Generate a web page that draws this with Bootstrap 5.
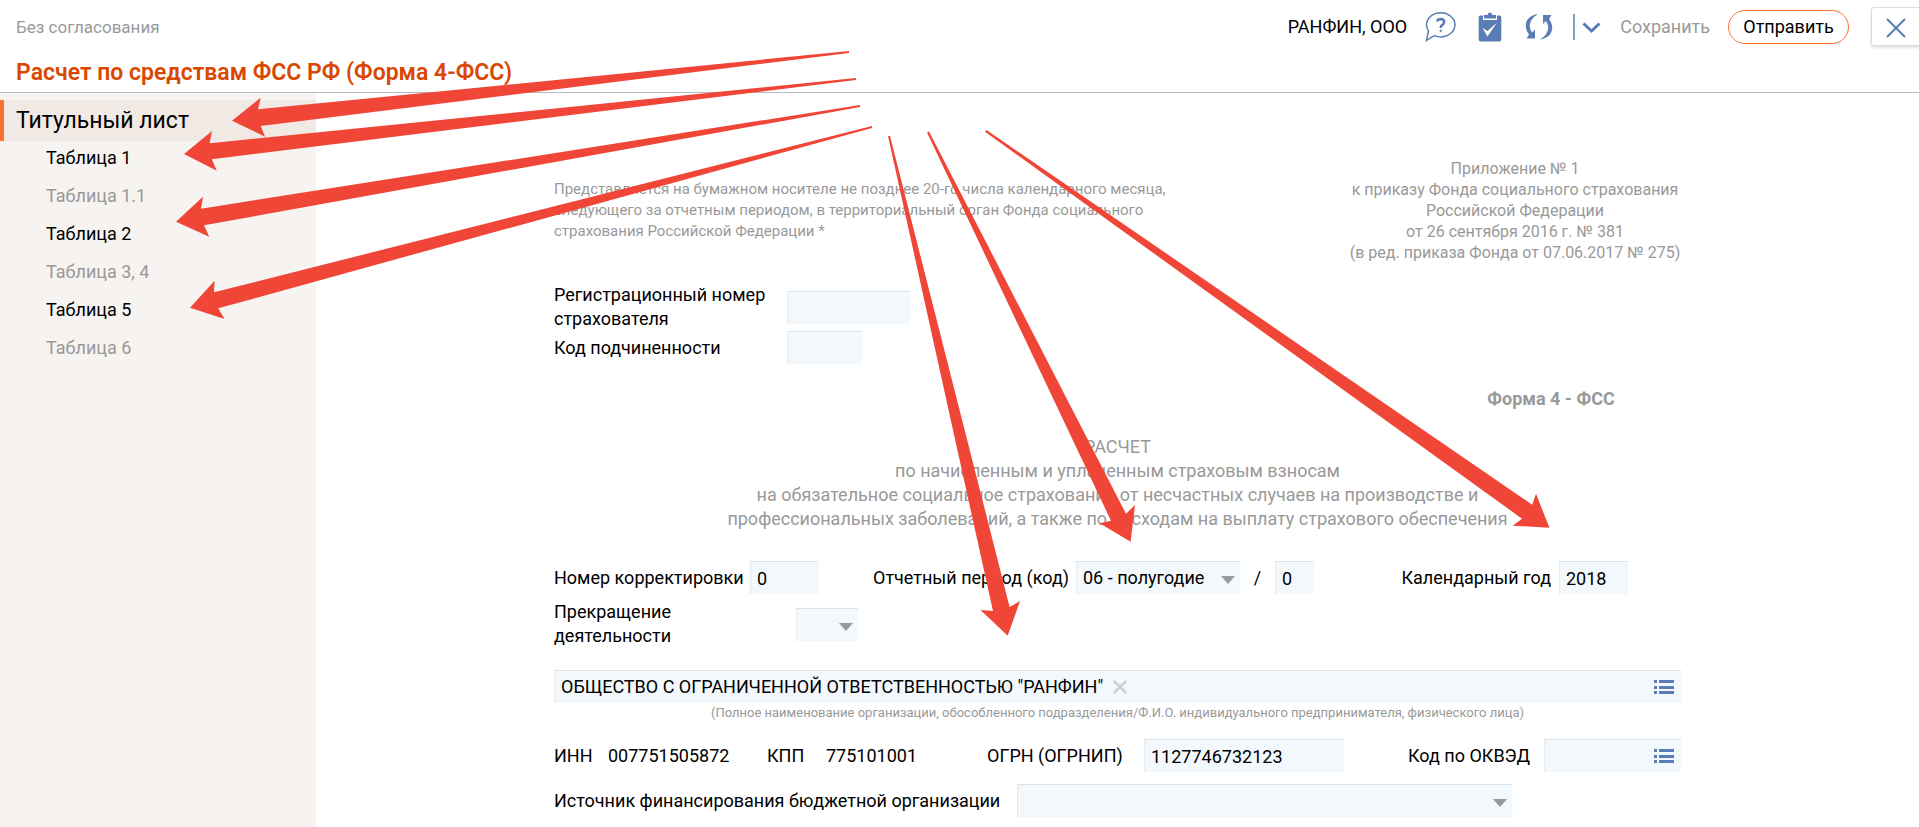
<!DOCTYPE html>
<html lang="ru">
<head>
<meta charset="utf-8">
<meta name="viewport" content="width=device-width, initial-scale=1">
<title>Расчет по средствам ФСС РФ (Форма 4-ФСС)</title>
<link rel="stylesheet" href="https://cdn.jsdelivr.net/npm/bootstrap@5.3.0/dist/css/bootstrap.min.css">
<style>
  body { font-family: Roboto, "Liberation Sans", sans-serif; font-size: 18px; line-height: 24px; color: #000; background: #fff; }
  a, button { color: inherit; text-decoration: none; }
  .muted { color: #999; }

  /* header */
  .top-line { height: 53px; padding-left: 16px; }
  .status { font-size: 17px; }
  .plain-btn { border: 0; background: none; padding: 0; line-height: 24px; }
  .plain-btn svg { display: block; }
  .ico { color: #5a7db5; }
  .tools { gap: 18px; }
  .send-btn { border: 1px solid #ff7033; border-radius: 17px; background: #fff; height: 34px; width: 121px; }
  .close-btn { width: 48px; height: 39px; border: 1px solid #ddd; border-right: 0; border-radius: 3px 0 0 3px; background: #fff; box-shadow: 0 2px 3px rgba(0,0,0,.12); }
  .doc-title { font-size: 23px; line-height: 39px; font-weight: 600; color: #d94800; padding-left: 16px; border-bottom: 1px solid #b9b9b9; margin: 0; }

  /* section list */
  .side { width: 316px; background: #f6f3f0; padding-top: 7px; }
  .side-head { display: block; border-left: 4px solid #ff7033; background: #f0e9e4; padding-left: 12px; font-size: 23px; line-height: 41px; }
  .side-list { gap: 14px; padding: 5px 0 0 46px; }

  /* form sheet */
  .sheet { max-width: 1127px; padding-top: 65px; }
  .note { font-size: 15px; line-height: 21px; padding-top: 21px; }
  .annex { font-size: 16px; line-height: 21px; width: 332px; }
  .field { height: 33px; border: 0; border-top: 1px solid #d9e3ea; border-left: 1px solid #e3ebf1; border-radius: 0; background: #f3f8fd; padding: 0 0 0 6px; color: #000; }
  select.field { appearance: none; width: 100%; }
  .pick { position: relative; }
  .pick::after { content: ""; position: absolute; right: 5px; top: 15px; border: 7px solid transparent; border-top: 8px solid #999; border-bottom: 0; pointer-events: none; }
  .w-reg { width: 233px; } .w-num { width: 196px; } .w-per { width: 203px; } .w-stop { width: 242px; }
  .f-39 { width: 39px; } .f-62 { width: 62px; } .f-69 { width: 69px; } .f-75 { width: 75px; } .f-123 { width: 123px; }
  .f-137 { width: 137px; } .f-164 { width: 164px; } .f-200 { width: 200px; } .f-495 { width: 495px; }
  .reg { margin-top: 20px; }
  .form-name { width: 260px; margin-top: 23px; }
  .report-name { margin-top: 24px; }
  .period { margin-top: 30px; padding-right: 53px; }
  .period .w-per { margin-left: 54px; }
  .period .ms-auto { padding-right: 8px; }
  .slash { width: 35px; }
  .stop { margin-top: 6px; }
  .org { margin-top: 22px; }
  .org input { border: 0; background: none; padding: 0; width: 552px; }
  .caption-line { font-size: 13px; line-height: 20px; }
  .list-btn { margin-right: 7px; }
  .codes { display: grid; grid-template-columns: 54px 159px 59px 161px 157px 200px 1fr 137px; margin-top: 16px; }
  .codes label[for="okved"] { justify-self: end; padding-right: 14px; }
  .okved input { border: 0; background: none; min-width: 0; padding: 0; }
  .source { margin-top: 12px; }
  .source label { width: 463px; }

  .arrows { position: absolute; left: 0; top: 0; width: 100%; pointer-events: none; fill: #f04638; }
</style>
</head>
<body class="min-vh-100 d-flex flex-column position-relative">
<header>
  <div class="top-line d-flex align-items-center">
    <span class="status muted">Без согласования</span>
    <div class="tools d-flex align-items-center ms-auto">
      <span>РАНФИН, ООО</span>
      <button class="plain-btn ico" type="button" aria-label="Помощь">
        <svg width="31" height="30" viewBox="0 0 31 30" fill="none" stroke="currentColor"><path d="M1.500 28.500 3.500 18.900A14.200 12 0 1 1 9.500 23.600Q5.500 25.500 1.500 28.500Z" stroke-width="1.500"/><path d="M12 9.500Q12.700 7 15.800 7 19.200 7.100 19.200 10 19.200 11.800 17.200 13.100 15.600 14.300 15.700 16" stroke-width="2.500"/><circle cx="15.700" cy="18.800" r=".8" fill="currentColor"/></svg>
      </button>
      <button class="plain-btn ico ms-1" type="button" aria-label="Задачи">
        <svg width="24" height="30" viewBox="0 0 24 30"><path fill="currentColor" d="M2.500 3.500H5V8h14V3.500h2.500Q23.300 3.500 23.300 5.500V27.500q0 2-2 2H2.700q-2 0-2-2V5.500q0-2 1.800-2Z"/><path fill="currentColor" d="M6 3h3.500q.5-2.500 2.500-2.500T14.500 3H18v3.500H6Z"/><path d="m4.500 16 5 8.500 9.500-14-9.500 8.500Z" fill="#fff"/></svg>
      </button>
      <button class="plain-btn ico ms-1" type="button" aria-label="Обновить">
        <svg width="30" height="28" viewBox="-1 0 30 28" fill="currentColor"><path d="M13 1C1 2.500-2.500 13 4 21.500L1.500 25.500H10V16.500L7.200 19.500C2.500 13.500 5 5.500 13 1Z"/><path d="M15 26.500C27 25 30.500 14.500 24 6L26.500 2H18V11L20.800 8C25.500 14 23 22 15 26.500Z"/></svg>
      </button>
      <button class="plain-btn ico" type="button" aria-label="Еще действия">
        <svg width="30" height="26" viewBox="0 0 30 26" fill="none" stroke="currentColor"><path d="M2 0V26" stroke-width="1.500"/><path d="m11.500 9.500 8 7.500 8-7.500" stroke-width="3"/></svg>
      </button>
      <button class="plain-btn muted" type="button">Сохранить</button>
      <button class="send-btn" type="button">Отправить</button>
      <button class="close-btn ico ms-1 p-0" type="button" aria-label="Закрыть">
        <svg width="20" height="20" viewBox="0 0 20 20" stroke="currentColor" stroke-width="2"><path d="m1 1 18 18M19 1 1 19"/></svg>
      </button>
    </div>
  </div>
  <h1 class="doc-title">Расчет по средствам ФСС РФ (Форма 4-ФСС)</h1>
</header>

<div class="d-flex flex-grow-1">
  <nav class="side flex-shrink-0">
    <a class="side-head" href="#">Титульный лист</a>
    <div class="side-list d-flex flex-column">
      <a href="#">Таблица 1</a>
      <a class="muted" href="#">Таблица 1.1</a>
      <a href="#">Таблица 2</a>
      <a class="muted" href="#">Таблица 3, 4</a>
      <a href="#">Таблица 5</a>
      <a class="muted" href="#">Таблица 6</a>
    </div>
  </nav>

  <main class="flex-grow-1">
    <form class="sheet mx-auto">
      <div class="muted d-flex justify-content-between">
        <p class="note mb-0">Представляется на бумажном носителе не позднее 20-го числа календарного месяца,<br>следующего за отчетным периодом, в территориальный орган Фонда социального<br>страхования Российской Федерации *</p>
        <p class="annex mb-0 text-center text-nowrap">Приложение № 1<br>к приказу Фонда социального страхования<br>Российской Федерации<br>от 26 сентября 2016 г. № 381<br>(в ред. приказа Фонда от 07.06.2017 № 275)</p>
      </div>

      <div class="reg d-flex align-items-center">
        <label class="w-reg" for="reg">Регистрационный номер<br>страхователя</label>
        <input class="field f-123" id="reg" type="text">
      </div>
      <div class="d-flex align-items-center">
        <label class="w-reg" for="sub">Код подчиненности</label>
        <input class="field f-75" id="sub" type="text">
      </div>

      <div class="form-name muted text-center fw-bold ms-auto">Форма 4 - ФСС</div>
      <div class="report-name muted text-center">РАСЧЕТ<br>по начисленным и уплаченным страховым взносам<br>на обязательное социальное страхование от несчастных случаев на производстве и<br>профессиональных заболеваний, а также по расходам на выплату страхового обеспечения</div>

      <div class="period d-flex align-items-center">
        <label class="w-num" for="corr">Номер корректировки</label>
        <input class="field f-69" id="corr" type="text" value="0">
        <label class="w-per" for="per">Отчетный период (код)</label>
        <div class="pick f-164"><select class="field" id="per"><option>06 - полугодие</option></select></div>
        <span class="slash text-center">/</span>
        <input class="field f-39" type="text" value="0" aria-label="Номер обращения">
        <label class="ms-auto" for="year">Календарный год</label>
        <input class="field f-69" id="year" type="text" value="2018">
      </div>
      <div class="stop d-flex align-items-center">
        <label class="w-stop" for="stop">Прекращение<br>деятельности</label>
        <div class="pick f-62"><select class="field" id="stop"><option></option></select></div>
      </div>

      <div class="org field d-flex align-items-center">
        <input type="text" value='ОБЩЕСТВО С ОГРАНИЧЕННОЙ ОТВЕТСТВЕННОСТЬЮ "РАНФИН"' aria-label="Полное наименование организации">
        <button class="plain-btn" type="button" aria-label="Очистить">
          <svg width="14" height="14" viewBox="0 0 14 14" stroke="#c8c8c8" stroke-width="2"><path d="m1 1 12 12M13 1 1 13"/></svg>
        </button>
        <button class="list-btn plain-btn ico ms-auto" type="button" aria-label="Выбрать организацию">
          <svg width="20" height="16" viewBox="0 0 20 16" fill="currentColor"><path d="M0 1h3v3H0ZM0 7h3v3H0ZM0 12h3v3H0ZM5 1h15v3H5ZM5 7h15v3H5ZM5 12h15v3H5Z"/></svg>
        </button>
      </div>
      <div class="caption-line muted text-center">(Полное наименование организации, обособленного подразделения/Ф.И.О. индивидуального предпринимателя, физического лица)</div>

      <div class="codes align-items-center">
        <span>ИНН</span><span>007751505872</span><span>КПП</span><span>775101001</span>
        <label for="ogrn">ОГРН (ОГРНИП)</label>
        <input class="field f-200" id="ogrn" type="text" value="1127746732123">
        <label for="okved">Код по ОКВЭД</label>
        <div class="okved field f-137 d-flex align-items-center">
          <input class="flex-fill" id="okved" type="text">
          <button class="list-btn plain-btn ico" type="button" aria-label="Выбрать код">
            <svg width="20" height="16" viewBox="0 0 20 16" fill="currentColor"><path d="M0 1h3v3H0ZM0 7h3v3H0ZM0 12h3v3H0ZM5 1h15v3H5ZM5 7h15v3H5ZM5 12h15v3H5Z"/></svg>
          </button>
        </div>
      </div>
      <div class="source d-flex align-items-center">
        <label for="src">Источник финансирования бюджетной организации</label>
        <div class="pick f-495"><select class="field" id="src"><option></option></select></div>
      </div>
    </form>
  </main>
</div>

<svg class="arrows" viewBox="0 0 1919 827" aria-hidden="true">
  <path d="M849 51 258 109.300 260.700 97.700 232 120.700 265 136.700 260.700 126 849 53Z"/>
  <path d="M856 78 209.600 143.300 212 131 184 154 216.800 170.700 211.800 159.300 856 80Z"/>
  <path d="M860 105 201 208.700 203 196.700 176 221.700 209.300 236.700 204 225.300 860 107Z"/>
  <path d="M872 126 214 292.300 214.600 280.700 190 307.700 224.600 319 218.200 308.300 872 128Z"/>
  <path d="M890 136 1009.600 607 1020 601 1007.700 635.700 980.500 610 993 611 888 136Z"/>
  <path d="M929 131.500 1126 513.700 1135 505 1130.600 541.700 1099.600 523.300 1111 520.700 927 132.500Z"/>
  <path d="M986.500 130 1532.200 504.700 1536 493.700 1549.400 527.700 1512.700 525.700 1522 518.700 985 131.700Z"/>
</svg>
<script src="https://cdn.jsdelivr.net/npm/bootstrap@5.3.0/dist/js/bootstrap.bundle.min.js"></script>
</body>
</html>
